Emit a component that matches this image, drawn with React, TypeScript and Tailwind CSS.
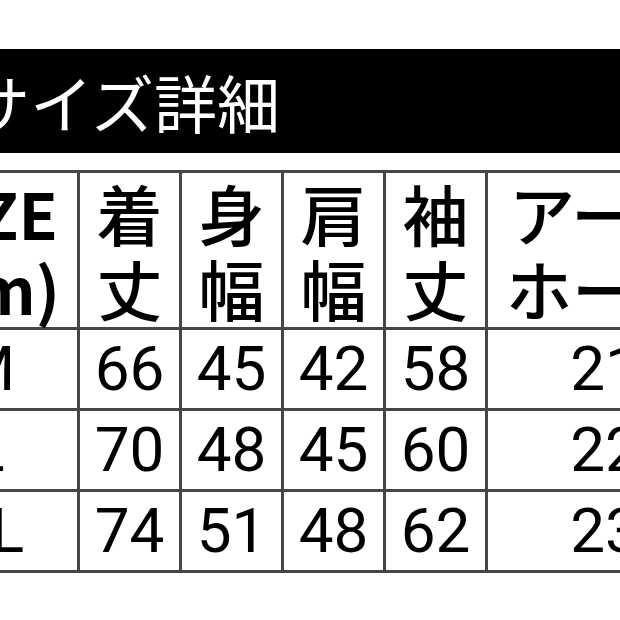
import { Fragment } from "react";

const headers = [
  ["着", "丈"],
  ["身", "幅"],
  ["肩", "幅"],
  ["袖", "丈"],
];

const rows = [
  { size: "M", values: ["66", "45", "42", "58"], arm: "21" },
  { size: "L", values: ["70", "48", "45", "60"], arm: "22" },
  { size: "XL", values: ["74", "51", "48", "62"], arm: "23" },
];

const headCell =
  "bg-white flex flex-col items-center justify-center text-black font-medium text-[66px] leading-[75px] whitespace-nowrap font-['Noto_Sans_CJK_JP','Noto_Sans',sans-serif]";
const numCell =
  "bg-white flex items-center justify-center text-black text-[62px] leading-none font-['Roboto','Liberation_Sans',sans-serif]";

export default function App() {
  return (
    <div className="w-[620px] h-[620px] overflow-hidden bg-white">
      <div className="h-[49px]" />
      {/* title bar */}
      <div className="h-[104px] bg-black flex items-center overflow-hidden">
        <span className="ml-[-33px] mt-[-2px] text-white text-[63px] leading-none whitespace-nowrap font-['Noto_Sans_CJK_JP','Noto_Sans',sans-serif]">
          サイズ詳細
        </span>
      </div>

      {/* size table */}
      <div className="mt-[17px] ml-[-104px] w-max">
        <div className="grid grid-cols-[178px_99px_99px_99px_99px_234px] grid-rows-[154px_78px_78px_78px] gap-[3px] p-[3px] bg-[#464646]">
          <div className="bg-white flex flex-col items-center justify-center text-black font-bold text-[64px] leading-[75px] font-['Noto_Sans_CJK_JP','Noto_Sans',sans-serif]">
            <span>SIZE</span>
            <span>(cm)</span>
          </div>
          {headers.map((h, i) => (
            <div key={i} className={headCell}>
              <span>{h[0]}</span>
              <span>{h[1]}</span>
            </div>
          ))}
          <div className={headCell}>
            <span>アーム</span>
            <span>ホール</span>
          </div>

          {rows.map((r) => (
            <Fragment key={r.size}>
              <div className={numCell}>{r.size}</div>
              {r.values.map((v, i) => (
                <div key={i} className={numCell}>
                  {v}
                </div>
              ))}
              <div className={numCell}>{r.arm}</div>
            </Fragment>
          ))}
        </div>
      </div>
    </div>
  );
}
